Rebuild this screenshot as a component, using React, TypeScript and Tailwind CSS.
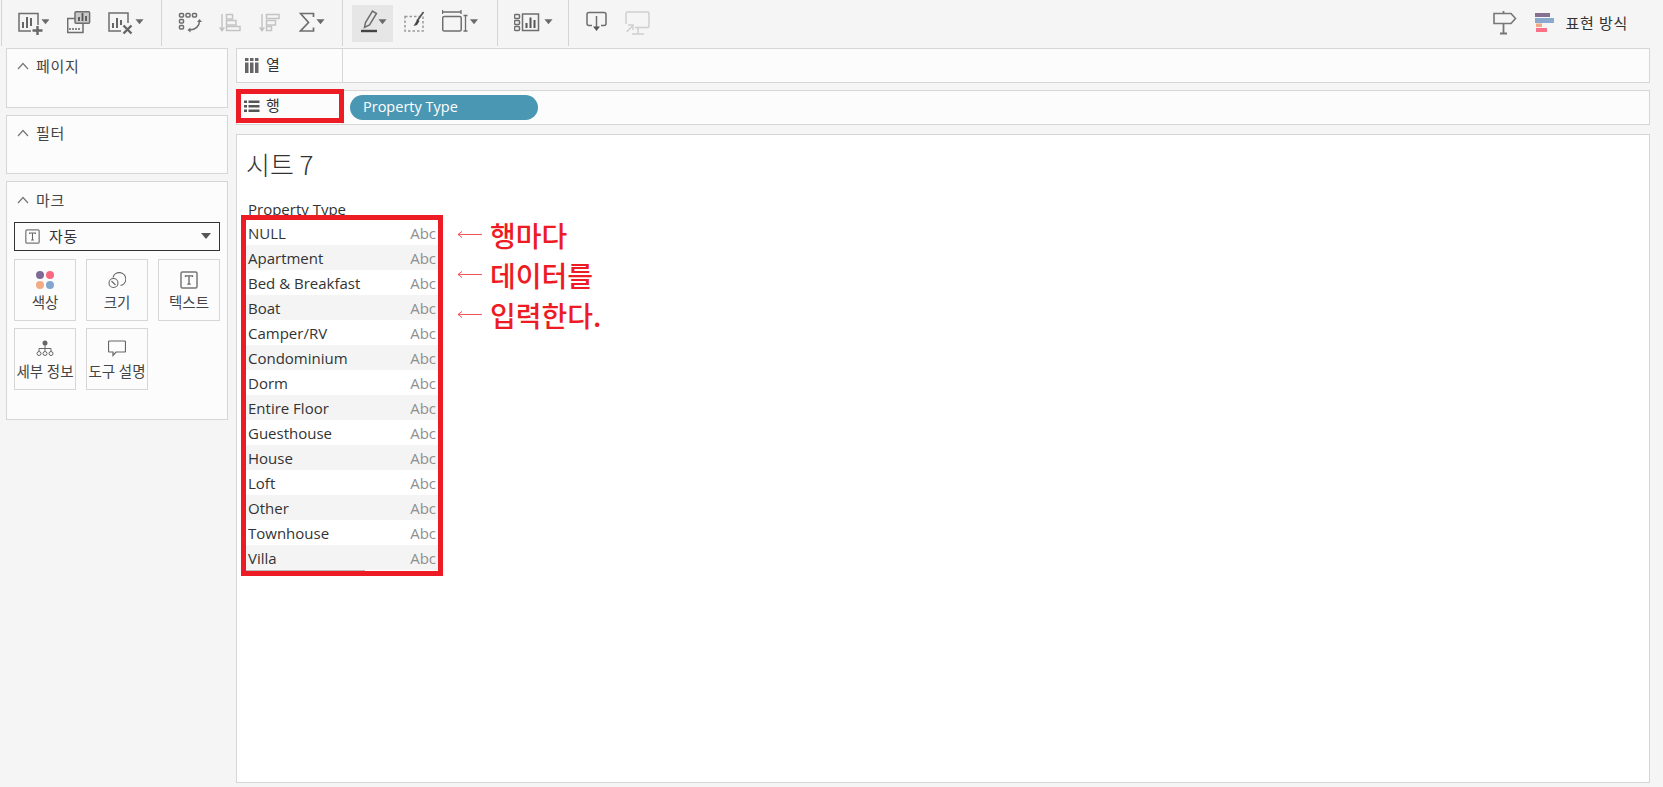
import React from "react";

const KR = "font-['Open_Sans','Noto_Sans_CJK_KR',sans-serif]";
const G = "#6e6e6e";

const Caret = ({ x, y, c = "#555" }: { x: number; y: number; c?: string }) => (
  <polygon points={`${x},${y} ${x + 5},${y} ${x + 2.5},${y + 3}`} fill={c} />
);

function Ico({ x, w, children, y = 8, h = 32 }: { x: number; w: number; y?: number; h?: number; children: React.ReactNode }) {
  return (
    <svg width={w} height={h} viewBox={`${x} ${y} ${w} ${h}`} fill="none" stroke={G} strokeWidth="1.5" className="shrink-0 block">
      {children}
    </svg>
  );
}

const Sep = () => <div className="w-px h-[46px] bg-[#d4d4d4] shrink-0" />;

function Toolbar() {
  return (
    <div className="h-[46px] flex items-center shrink-0">
      <div className="ml-px"><Sep /></div>
      <div className="ml-[16px]">
        <Ico x={18} w={31}>
          <path d="M31 32H19V14.500H38V26" />
          <path d="M23 29v-6M27 29V18M31 27v-8" strokeWidth="2" stroke="#666" />
          <path d="M37.500 27v9M32.500 31.500h10" strokeWidth="2.400" stroke="#666" />
          <Caret x={43} y={21} />
        </Ico>
      </div>
      <div className="ml-[18px]">
        <Ico x={67} w={24}>
          <rect x="75" y="12.700" width="14.600" height="11.500" rx="1" fill="#c9c9c9" />
          <path d="M79 22v-4M82.500 22v-8M86 22v-5" strokeWidth="1.800" stroke="#555" />
          <path d="M75 19.500H67.700V33.500H83V24.500" />
          <path d="M70 31v-2M73 31v-2M76 31v-2M79 31v-2" strokeWidth="1.600" />
        </Ico>
      </div>
      <div className="ml-[17px]">
        <Ico x={108} w={36}>
          <path d="M121 32H109V14H128V24" />
          <path d="M113 29v-5M117 29V19M121 26v-5" strokeWidth="2" stroke="#666" />
          <path d="M123.500 26.500l8 8M131.500 26.500l-8 8" strokeWidth="2.400" stroke="#666" />
          <Caret x={137} y={21} />
        </Ico>
      </div>
      <div className="ml-[17px]"><Sep /></div>
      <div className="ml-[16px]">
        <Ico x={178} w={24}>
          <rect x="179.500" y="14.500" width="4" height="3.600" rx="1" />
          <rect x="186" y="14.500" width="4" height="3.600" rx="1" />
          <rect x="192.500" y="14.500" width="4" height="3.600" rx="1" />
          <rect x="179.500" y="20.500" width="4" height="3.600" rx="1" />
          <rect x="179.500" y="26.500" width="4" height="3.600" rx="1" />
          <path d="M199.500 22c0 5-4 9-10 9" />
          <path d="M197 23l2.500-3 2.500 3zM190.500 28.500l-3 2.500 3 2.500z" fill={G} stroke="none" />
        </Ico>
      </div>
      <div className="ml-[16px]">
        <Ico x={218} w={23}>
          <g stroke="#c4c4c4">
            <path d="M222 15v16" />
            <path d="M218.800 28.500h6.400L222 33z" fill="#c4c4c4" stroke="none" />
            <rect x="226.500" y="15.500" width="6" height="4.500" />
            <rect x="226.500" y="21.500" width="9.500" height="4.500" />
            <rect x="226.500" y="27.500" width="13.500" height="4" />
          </g>
        </Ico>
      </div>
      <div className="ml-[17px]">
        <Ico x={258} w={22}>
          <g stroke="#c4c4c4">
            <path d="M262 15v16" />
            <path d="M258.800 28.500h6.400L262 33z" fill="#c4c4c4" stroke="none" />
            <rect x="266.500" y="15.500" width="12.500" height="4" />
            <rect x="266.500" y="21.500" width="9" height="4.500" />
            <rect x="266.500" y="27.500" width="5" height="4" />
          </g>
        </Ico>
      </div>
      <div className="ml-[19px]">
        <Ico x={299} w={26}>
          <path d="M313.500 18v-3.500H300.500L308.500 23.500L300.500 32H313.500V28.500" strokeWidth="1.700" />
          <Caret x={318} y={21} />
        </Ico>
      </div>
      <div className="ml-[17px]"><Sep /></div>
      <div className="ml-[9px] w-[41px] h-[37px] bg-[#e6e6e6] shrink-0 flex items-center justify-center">
        <Ico x={358} w={28}>
          <path d="M363.500 28.500l1-5 7-11.500 4 2.500-7 11.500z" />
          <path d="M360 32h16" strokeWidth="2.400" stroke="#444" />
          <Caret x={379} y={21} />
        </Ico>
      </div>
      <div className="ml-[11px]">
        <Ico x={405} w={22}>
          <rect x="406" y="17.500" width="18" height="14.500" strokeDasharray="2.500 2" stroke="#999" />
          <path d="M424.500 13L418 22" stroke="#555" strokeWidth="1.800" />
          <path d="M418.500 20.500l2 1.500-2.500 4-3.500 1z" fill="#444" stroke="none" />
        </Ico>
      </div>
      <div className="ml-[16px]">
        <Ico x={443} w={36}>
          <path d="M443.500 11v4M462 11v4M443.500 13H462" strokeWidth="1.300" />
          <rect x="443.700" y="17.500" width="18.500" height="14.500" rx="1.500" />
          <path d="M464.500 16.500h4M466.500 16.500v15.500M464.500 32h4" strokeWidth="1.300" />
          <Caret x={472.500} y={21} />
        </Ico>
      </div>
      <div className="ml-[19px]"><Sep /></div>
      <div className="ml-[16px]">
        <Ico x={514} w={40}>
          <rect x="514.500" y="15.500" width="5" height="4" rx="1" />
          <rect x="514.500" y="21.500" width="5" height="4" rx="1" />
          <rect x="514.500" y="27.500" width="5" height="4" rx="1" />
          <rect x="522.500" y="15" width="16" height="16.500" />
          <path d="M526.500 29v-5M530.500 29V18.500M534.500 29v-8" strokeWidth="2" stroke="#555" />
          <Caret x={546} y={21} />
        </Ico>
      </div>
      <div className="ml-[14px]"><Sep /></div>
      <div className="ml-[17px]">
        <Ico x={586} w={21}>
          <path d="M592 26.500h-3a2 2 0 0 1-2-2V15.500a2 2 0 0 1 2-2h15a2 2 0 0 1 2 2v9a2 2 0 0 1-2 2h-3" />
          <path d="M596.500 17v11" />
          <path d="M593 27.500h7L596.500 32z" fill="#555" stroke="none" />
        </Ico>
      </div>
      <div className="ml-[17px]">
        <Ico x={623} w={26}>
          <g stroke="#cfcfcf">
            <path d="M625 25V14.500a1.500 1.500 0 0 1 1.500-1.500h20a1.500 1.500 0 0 1 1.500 1.500V27a1.500 1.500 0 0 1-1.500 1.500H634" />
            <path d="M637 29v6M631 35h12" />
            <path d="M625.500 33l6-6" />
            <path d="M627 26h5v5" />
          </g>
        </Ico>
      </div>
      <div className="ml-auto">
        <Ico x={1492} w={26}>
          <path d="M1494 14.500H1511L1515.500 19.500L1511 24.500H1494Z" stroke="#777" strokeWidth="1.600" />
          <path d="M1503.500 12v2.500M1503.500 24.500V34M1500 34.500h7" stroke="#777" strokeWidth="1.800" />
        </Ico>
      </div>
      <div className="ml-[17px]">
        <Ico x={1535} w={20}>
          <rect x="1535" y="14" width="15" height="4" fill="#86708f" stroke="none" />
          <rect x="1535" y="19" width="19" height="5" fill="#8aa9cd" stroke="none" />
          <rect x="1536" y="24.500" width="6" height="3.500" fill="#f2a882" stroke="none" />
          <rect x="1536" y="29" width="11" height="4" fill="#fb7185" stroke="none" />
        </Ico>
      </div>
      <span className={`ml-[10px] mr-[35px] text-[15px] tracking-[0.7px] text-[#333] ${KR}`}>표현 방식</span>
    </div>
  );
}

function Chevron() {
  return (
    <svg width="12" height="8" viewBox="0 0 12 8" fill="none" stroke="#777" strokeWidth="1.200" className="shrink-0">
      <path d="M1 7l5-5.500L11 7" />
    </svg>
  );
}

function Card({ title, className, headClass, children }: { title: string; className: string; headClass: string; children?: React.ReactNode }) {
  return (
    <div className={`bg-[#fcfcfc] border border-[#d6d6d6] shrink-0 ${className}`}>
      <div className={`flex items-center gap-[7px] pl-[10px] h-[32px] ${headClass}`}>
        <Chevron />
        <span className={`text-[15px] tracking-[0.7px] text-[#444] ${KR}`}>{title}</span>
      </div>
      {children}
    </div>
  );
}

function Tile({ label, children }: { label: string; children: React.ReactNode }) {
  return (
    <div className="w-[62px] h-[62px] bg-[#fcfcfc] border border-[#d6d6d6] flex flex-col items-center pt-[10px]">
      <div className="h-[20px] flex items-center justify-center">{children}</div>
      <span className={`mt-[4px] text-[14.500px] leading-[18px] text-[#444] whitespace-nowrap ${KR}`}>{label}</span>
    </div>
  );
}

const TBox = ({ s = 18 }: { s?: number }) => (
  <svg width={s} height={s} viewBox="0 0 18 18" fill="none">
    <rect x="1" y="1" width="16" height="16" rx="1.500" stroke="#777" strokeWidth="1.500" />
    <path d="M5.500 6V4.800h7V6M9 4.800v8.400M7.300 13.200h3.400" stroke="#666" strokeWidth="1.300" />
  </svg>
);

function Marks() {
  return (
    <Card title="마크" className="h-[239px] mt-[7px]" headClass="pt-[4px]">
      <div className="px-[7px] pt-[8px]">
        <div className="h-[29px] border border-[#333] flex items-center pl-[10px] pr-[8px] bg-[#fcfcfc]">
          <TBox s={15} />
          <span className={`ml-[9px] text-[15px] tracking-[0.7px] text-[#333] ${KR}`}>자동</span>
          <svg width="10" height="7" viewBox="0 0 10 7" className="ml-auto"><polygon points="0,0 10,0 5,6" fill="#555" /></svg>
        </div>
        <div className="grid grid-cols-[62px_62px_62px] gap-x-[10px] gap-y-[7px] mt-[8px]">
          <Tile label="색상">
            <svg width="18" height="18" viewBox="0 0 18 18">
              <circle cx="4" cy="4" r="4" fill="#7e6a94" />
              <circle cx="14" cy="4" r="4" fill="#f9687f" />
              <circle cx="4" cy="14" r="4" fill="#f3ab84" />
              <circle cx="14" cy="14" r="4" fill="#82a6cc" />
            </svg>
          </Tile>
          <Tile label="크기">
            <svg width="18" height="18" viewBox="0 0 18 18" fill="none" stroke="#666" strokeWidth="1.100">
              <path d="M5 6.500a6.500 6.500 0 1 1 7.500 8" />
              <circle cx="5.500" cy="12" r="4.500" />
              <path d="M3.500 10l4 4" />
            </svg>
          </Tile>
          <Tile label="텍스트"><TBox /></Tile>
          <Tile label="세부 정보">
            <svg width="18" height="18" viewBox="0 0 18 18" fill="none" stroke="#666" strokeWidth="1">
              <circle cx="9" cy="3" r="2.500" fill="#666" stroke="none" />
              <path d="M9 5v6M3 11V8.500h12V11" />
              <circle cx="3" cy="13.500" r="2" />
              <circle cx="9" cy="13.500" r="2" />
              <circle cx="15" cy="13.500" r="2" />
            </svg>
          </Tile>
          <Tile label="도구 설명">
            <svg width="18" height="18" viewBox="0 0 18 18" fill="none" stroke="#666" strokeWidth="1.200">
              <path d="M1.500 1h15a1 1 0 0 1 1 1v9a1 1 0 0 1-1 1H8l-3 3.500V12H1.500a1 1 0 0 1-1-1V2a1 1 0 0 1 1-1z" />
            </svg>
          </Tile>
        </div>
      </div>
    </Card>
  );
}

const rows = ["NULL", "Apartment", "Bed & Breakfast", "Boat", "Camper/RV", "Condominium", "Dorm", "Entire Floor", "Guesthouse", "House", "Loft", "Other", "Townhouse", "Villa"];

function Arrow() {
  return (
    <svg width="25" height="9" viewBox="0 0 25 9" fill="none" className="shrink-0 -mt-px">
      <path d="M1 4.500H25" stroke="#f0555c" strokeWidth="1" />
      <path d="M5 1.500L1 4.500L5 7.500" stroke="#f0555c" strokeWidth="1" />
    </svg>
  );
}

function Note({ text }: { text: string }) {
  return (
    <div className="h-[40px] flex items-center">
      <Arrow />
      <span className="ml-[8px] text-[28px] leading-[40px] font-medium text-[#ed1c24] whitespace-nowrap font-['Noto_Sans_CJK_KR',sans-serif]">{text}</span>
    </div>
  );
}

function Shelf({ label, labelClass, icon, children }: { label: string; labelClass: string; icon: React.ReactNode; children?: React.ReactNode }) {
  return (
    <div className="relative h-[35px] bg-[#fcfcfc] border border-[#d6d6d6] flex items-center shrink-0">
      <div className="w-[106px] h-full flex items-center pl-[7px] border-r border-[#d6d6d6]">
        <div className="w-[16px] flex justify-center">{icon}</div>
        <span className={`ml-[6px] text-[15px] text-[#333] ${labelClass} ${KR}`}>{label}</span>
      </div>
      {children}
    </div>
  );
}

export default function App() {
  return (
    <div className="w-[1663px] h-[787px] bg-[#f5f5f5] flex flex-col overflow-hidden">
      <Toolbar />
      <div className="flex flex-1 pt-[2px] pb-[4px]">
        <div className="ml-[6px] w-[222px] flex flex-col shrink-0">
          <Card title="페이지" className="h-[60px]" headClass="pt-[2px]" />
          <Card title="필터" className="h-[59px] mt-[7px]" headClass="pt-[2px]" />
          <Marks />
        </div>
        <div className="ml-[8px] w-[1414px] flex flex-col">
          <Shelf
            label="열"
            labelClass="pb-[2px]"
            icon={
              <svg width="14" height="15" viewBox="0 0 14 15" fill="#666">
                <rect x="0" y="0" width="3.500" height="3" />
                <rect x="5" y="0" width="3.500" height="3" />
                <rect x="10" y="0" width="3.500" height="3" />
                <rect x="0" y="4.500" width="3.500" height="10.500" />
                <rect x="5" y="4.500" width="3.500" height="10.500" />
                <rect x="10" y="4.500" width="3.500" height="10.500" />
              </svg>
            }
          />
          <div className="mt-[7px]">
            <Shelf
              label="행"
              labelClass="pb-[4px]"
              icon={
                <svg width="16" height="13" viewBox="0 0 16 13" fill="#555" className="-mt-[2px]">
                  <rect x="0" y="0.500" width="3" height="2.500" />
                  <rect x="4.500" y="0.500" width="11" height="2.500" />
                  <rect x="0" y="5" width="3" height="2.500" />
                  <rect x="4.500" y="5" width="11" height="2.500" />
                  <rect x="0" y="9.500" width="3" height="2.500" />
                  <rect x="4.500" y="9.500" width="11" height="2.500" />
                </svg>
              }
            >
              <div className="absolute -left-px -top-[2px] w-[108px] h-[34px] border-[5px] border-[#ed1c24]" />
              <div className={`ml-[7px] w-[188px] h-[25px] rounded-full bg-[#4a97b3] text-white text-[14.500px] flex items-center pl-[13px] pb-[2px] ${KR}`}>Property Type</div>
            </Shelf>
          </div>
          <div className="mt-[9px] flex-1 bg-white border border-[#d6d6d6] pt-[13px] pl-[4px]">
            <div className="pl-[5px] h-[33px] text-[26px] leading-[32px] text-[#333] font-light font-['Noto_Sans_CJK_KR','Open_Sans',sans-serif]">시트 7</div>
            <div className="h-[39px] pl-[7px] pt-[18px] text-[15px] leading-[20px] text-[#333] font-['Open_Sans',sans-serif]">Property Type</div>
            <div className="flex items-start">
              <div className="relative w-[202px] -mt-[5px] border-[5px] border-[#ed1c24] bg-white">
                {rows.map((r, i) => (
                  <div key={r} className={`h-[25px] flex items-center justify-between pl-[2px] pr-[2px] pt-[2px] font-['Open_Sans',sans-serif] text-[15px] ${i % 2 === 1 ? "bg-[#f4f4f4]" : "bg-white"}`}>
                    <span className="text-[#333]">{r}</span>
                    <span className="text-[#8f8f8f]">Abc</span>
                  </div>
                ))}
                <div className="h-px w-[119px] bg-[#bbbbbb]" />
              </div>
              <div className="ml-[14px] -mt-[5px] flex flex-col">
                <Note text="행마다" />
                <Note text="데이터를" />
                <Note text="입력한다." />
              </div>
            </div>
          </div>
        </div>
      </div>
    </div>
  );
}
